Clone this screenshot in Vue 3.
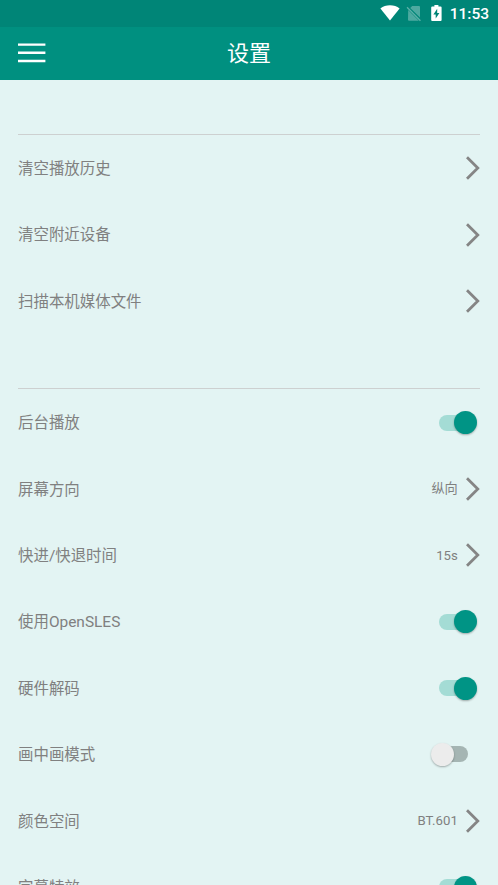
<script setup>
import { ref } from 'vue'

const sections = ref([
  [
    { label: '清空播放历史', type: 'link' },
    { label: '清空附近设备', type: 'link' },
    { label: '扫描本机媒体文件', type: 'link' },
  ],
  [
    { label: '后台播放', type: 'switch', on: true },
    { label: '屏幕方向', type: 'link', value: '纵向' },
    { label: '快进/快退时间', type: 'link', value: '15s' },
    { label: '使用OpenSLES', type: 'switch', on: true },
    { label: '硬件解码', type: 'switch', on: true },
    { label: '画中画模式', type: 'switch', on: false },
    { label: '颜色空间', type: 'link', value: 'BT.601' },
    { label: '字幕特效', type: 'switch', on: true },
  ],
])
</script>

<template>
  <div class="screen">
    <div class="status">
      <svg class="wifi" width="20" height="16" viewBox="0 0 20 16">
        <path d="M10 15.4 L0.4 3.4 C3 1.4 6.3 0.2 10 0.2 C13.7 0.2 17 1.4 19.6 3.4 Z" fill="#fff" />
      </svg>
      <svg class="sim" width="16" height="17" viewBox="0 0 16 17">
        <path d="M6.2 1 H13 Q14 1 14 2 V12.6 L4.2 2.9 Z M2.2 5 L12.8 15.8 H3 Q2 15.8 2 14.8 Z" fill="#fff" opacity=".3" />
        <path d="M1 2.3 L14.4 15.7" stroke="#fff" stroke-width="1.3" opacity=".36" />
      </svg>
      <svg class="battery" width="11" height="16" viewBox="0 0 11 16">
        <path d="M3.4 0 H7.4 V1.6 H9.6 Q10.6 1.6 10.6 2.6 V15 Q10.6 16 9.6 16 H1.2 Q.2 16 .2 15 V2.6 Q.2 1.6 1.2 1.6 H3.4 Z" fill="#fff" />
        <path d="M6.2 3.8 L2.4 9.6 H4.7 V13.6 L8.4 7.9 H6.2 Z" fill="#008577" />
      </svg>
      <span class="clock">11:53</span>
    </div>
    <header class="bar">
      <button class="menu" aria-label="菜单">
        <svg width="28" height="20" viewBox="0 0 28 20">
          <path d="M0 1.6 H27.4 M0 9.8 H27.4 M0 18 H27.4" stroke="#fff" stroke-width="2.4" />
        </svg>
      </button>
      <h1>设置</h1>
      <span class="balance"></span>
    </header>
    <main>
      <section v-for="(rows, s) in sections" :key="s">
        <div v-for="row in rows" :key="row.label" class="row">
          <span class="label">{{ row.label }}</span>
          <template v-if="row.type === 'link'">
            <span v-if="row.value" class="value">{{ row.value }}</span>
            <svg class="chevron" width="15" height="26" viewBox="0 0 15 26">
              <path d="M2 2.2 L12.8 13 L2 23.8" fill="none" stroke="#858585" stroke-width="2.8" />
            </svg>
          </template>
          <button v-else class="switch" :class="{ on: row.on }" :aria-label="row.label" @click="row.on = !row.on">
            <span class="thumb"></span>
          </button>
        </div>
      </section>
    </main>
  </div>
</template>

<style>
body {
  background: #e3f4f3;
  overflow: hidden;
}
</style>

<style scoped>
.screen {
  height: 885px;
  overflow: hidden;
  display: flex;
  flex-direction: column;
  background: #e3f4f3;
  font-family: Roboto, "Noto Sans CJK SC", sans-serif;
  color: #808080;
}
button {
  border: 0;
  padding: 0;
  background: none;
}
.status {
  flex: none;
  height: 26.5px;
  box-sizing: border-box;
  padding: 0 9px 0 0;
  display: flex;
  align-items: center;
  justify-content: flex-end;
  background: #008577;
  color: #fff;
}
.sim {
  margin-left: 6px;
}
.battery {
  margin-left: 9px;
}
.clock {
  margin-left: 8px;
  padding-top: 1px;
  font-size: 15.5px;
  line-height: 20px;
  font-weight: 500;
}
.bar {
  flex: none;
  height: 53.3px;
  box-sizing: border-box;
  padding: 0 18px;
  display: flex;
  align-items: center;
  justify-content: space-between;
  background: #009080;
  color: #fff;
}
.menu {
  width: 28px;
  display: flex;
}
h1 {
  margin: 0;
  padding-top: 2px;
  font-size: 22px;
  font-weight: 400;
  line-height: 30px;
}
.balance {
  width: 28px;
}
section {
  margin: 54.2px 18px 0;
  border-top: 1px solid #cdd0d0;
}
.row {
  height: 66.4px;
  display: flex;
  align-items: center;
}
.label {
  flex: 1;
  padding-top: 1.4px;
  font-size: 15.45px;
  line-height: 24px;
}
.value {
  padding-top: 1px;
  font-size: 13.2px;
  line-height: 20px;
  margin-right: 7.6px;
}
.chevron {
  margin-right: -0.4px;
}
.switch {
  width: 29px;
  height: 16px;
  margin-right: 12px;
  border-radius: 8px;
  background: #a5b5b3;
  display: flex;
  align-items: center;
}
.thumb {
  flex: none;
  width: 23px;
  height: 23px;
  margin-left: -8px;
  border-radius: 50%;
  background: #ececec;
  box-shadow: 0 1px 2px rgba(0, 0, 0, .3);
}
.switch.on {
  background: #a4dcd5;
}
.switch.on .thumb {
  margin-left: 14.6px;
  background: #009485;
}
</style>
